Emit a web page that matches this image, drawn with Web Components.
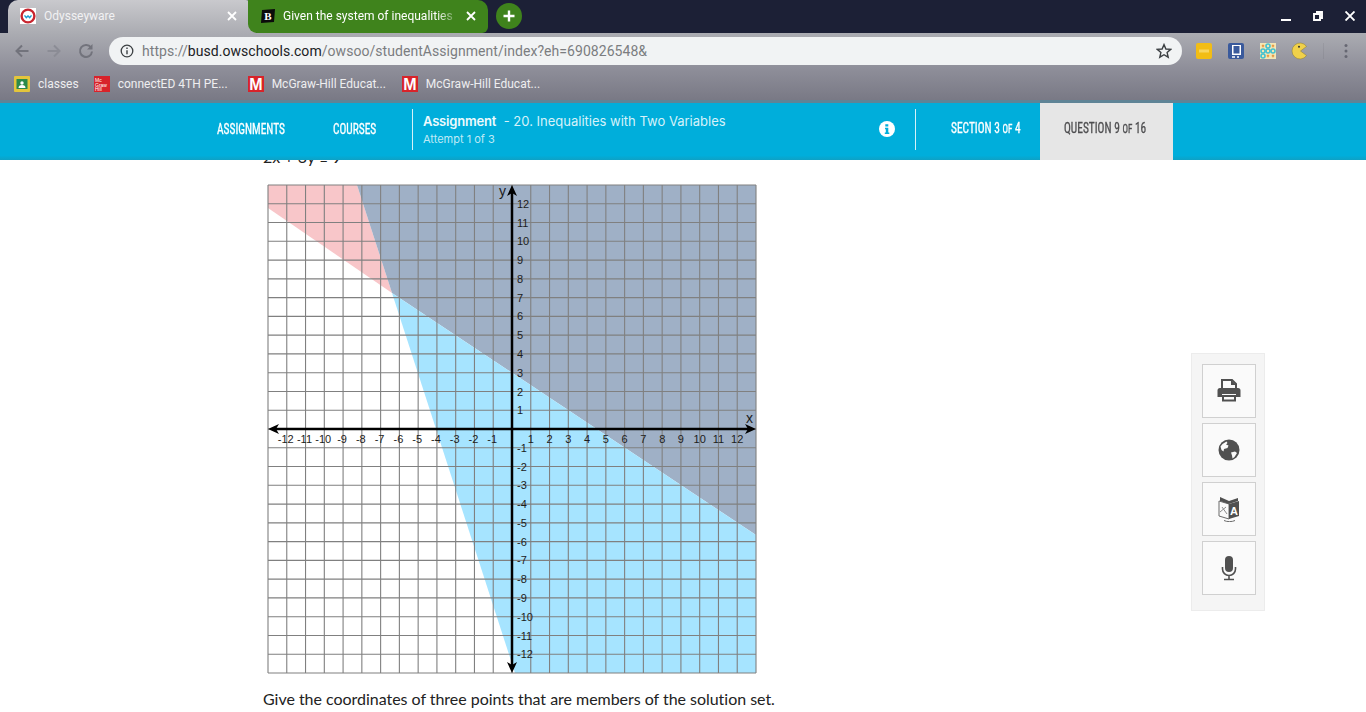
<!DOCTYPE html>
<html lang="en">
<head>
<meta charset="utf-8">
<title>Odysseyware</title>
<style>
    html, body { margin: 0; height: 712px; overflow: hidden; background: #fff; }
    body { display: flex; flex-direction: column; font-family: "Lato", "Liberation Sans", sans-serif; }
</style>
</head>
<body>
<browser-tabs></browser-tabs>
<browser-toolbar></browser-toolbar>
<bookmark-bar></bookmark-bar>
<lesson-header></lesson-header>
<question-view></question-view>

<script>
class BrowserTabs extends HTMLElement {
    constructor() {
        super();
        this.attachShadow({ mode: 'open' });
    }

    connectedCallback() {
        this.shadowRoot.innerHTML = `
            <style>
                :host {
                    display: flex;
                    height: 33px;
                    flex: none;
                    background: #1c2036;
                    font: 12px Roboto, sans-serif;
                    color: #fff;
                }
                .tab {
                    display: flex;
                    align-items: center;
                    box-sizing: border-box;
                    height: 33px;
                    padding-bottom: 2px;
                }
                .first {
                    width: 248px;
                    margin: 0 -8px 0 8px;
                    padding: 0 19px 2px 12px;
                    border-radius: 10px 10px 0 0;
                    background: linear-gradient(#c9c9cd, #abacb2);
                    color: #f1f1f3;
                }
                .second {
                    position: relative;
                    width: 240px;
                    padding-left: 12px;
                    border-radius: 0 10px 6px 9px;
                    background: #3f831c;
                }
                .icon { flex: none; width: 16px; height: 16px; margin-right: 8px; }
                .second .icon { margin-right: 7px; }
                .title { flex: 1; overflow: hidden; white-space: nowrap; }
                .second .title {
                    -webkit-mask-image: linear-gradient(90deg, #000 90%, rgba(0, 0, 0, .25));
                    mask-image: linear-gradient(90deg, #000 90%, rgba(0, 0, 0, .25));
                }
                .close { flex: none; width: 10px; height: 10px; }
                .second .close { margin: 0 12px 0 12px; }
                .plus { flex: none; width: 30px; height: 30px; margin: 1px 0 0 6px; }
                .space { flex: 1; }
                .win { display: flex; align-items: center; gap: 22px; padding: 0 11px 2px 0; }
            </style>
            <div class="tab first">
                <svg class="icon" viewBox="0 0 16 16">
                    <rect width="16" height="16" fill="#fff"/>
                    <circle cx="8" cy="8" r="6.4" fill="#fff" stroke="#c8252f" stroke-width="2.4"/>
                    <path d="M4.5 7.4l1.8 2.2 1.7-1.7 1.7 1.7 1.8-2.2" fill="none" stroke="#1d9bd1" stroke-width="1.4"/>
                </svg>
                <span class="title">Odysseyware</span>
                <svg class="close" viewBox="0 0 10 10"><path d="M1 1l8 8M9 1l-8 8" stroke="#fff" stroke-width="1.8"/></svg>
            </div>
            <div class="tab second">
                <svg class="icon" viewBox="0 0 16 16">
                    <path d="M2 2l13-1-1 13-13 1z" fill="#0b0b0b"/>
                    <text x="8" y="12" text-anchor="middle" font-family="Liberation Serif" font-weight="700" font-size="11" fill="#fff">B</text>
                </svg>
                <span class="title">Given the system of inequalities</span>
                <svg class="close" viewBox="0 0 10 10"><path d="M1 1l8 8M9 1l-8 8" stroke="#fff" stroke-width="1.8"/></svg>
            </div>
            <svg class="plus" viewBox="0 0 30 30">
                <circle cx="15" cy="15" r="13" fill="#3f831c"/>
                <path d="M15 9.5v11M9.5 15h11" stroke="#fff" stroke-width="2.4"/>
            </svg>
            <div class="space"></div>
            <div class="win">
                <svg width="10" height="10" viewBox="0 0 10 10"><path d="M0 9h10" stroke="#fff" stroke-width="2"/></svg>
                <svg width="10" height="10" viewBox="0 0 10 10"><path d="M3 1h6v6H7M1 3h6v6H1z" fill="none" stroke="#fff" stroke-width="1.9"/></svg>
                <svg width="10" height="10" viewBox="0 0 10 10"><path d="M.5.5l9 9M9.5.5l-9 9" stroke="#fff" stroke-width="1.9"/></svg>
            </div>
        `;
    }
}

class BrowserToolbar extends HTMLElement {
    constructor() {
        super();
        this.attachShadow({ mode: 'open' });
    }

    connectedCallback() {
        this.shadowRoot.innerHTML = `
            <style>
                :host {
                    display: flex;
                    align-items: center;
                    height: 36px;
                    flex: none;
                    background: linear-gradient(#abacb2, #8e8e99);
                    font: 14px Roboto, sans-serif;
                }
                .nav { display: flex; gap: 14px; padding-left: 13px; }
                .nav svg { width: 18px; height: 18px; }
                .omni {
                    display: flex;
                    align-items: center;
                    box-sizing: border-box;
                    width: 1073px;
                    height: 28px;
                    margin-left: 14px;
                    padding: 0 10px 0 11px;
                    border-radius: 14px;
                    background: #f1f3f4;
                    color: #7b7d80;
                }
                .omni .url { flex: 1; margin-left: 8px; letter-spacing: .05px; }
                .omni b { font-weight: 400; color: #202124; }
                .ext { display: flex; gap: 14px; margin-left: 13px; }
                .ext svg { width: 18px; height: 18px; }
                .sep { width: 1px; height: 16px; margin-left: 14px; background: rgba(0, 0, 0, .06); }
                .menu { margin-left: 20px; }
            </style>
            <div class="nav">
                <svg viewBox="0 0 18 18"><path d="M15.5 9H3.5M9 3.5L3.5 9 9 14.5" fill="none" stroke="#72737c" stroke-width="2"/></svg>
                <svg viewBox="0 0 18 18"><path d="M2.5 9h12M9 3.5L14.5 9 9 14.5" fill="none" stroke="#8b8c95" stroke-width="2"/></svg>
                <svg viewBox="0 0 18 18"><path d="M14 5.6A6 6 0 1 0 15 9.5" fill="none" stroke="#72737c" stroke-width="2"/><path d="M15.5 2v5.5H10z" fill="#72737c"/></svg>
            </div>
            <div class="omni">
                <svg width="14" height="14" viewBox="0 0 14 14"><circle cx="7" cy="7" r="5.8" fill="none" stroke="#3c4043" stroke-width="1.3"/><path d="M7 6.2v4M7 3.6v1.4" stroke="#3c4043" stroke-width="1.4"/></svg>
                <span class="url">https://<b>busd.owschools.com</b>/owsoo/studentAssignment/index?eh=690826548&amp;</span>
                <svg width="16" height="16" viewBox="0 0 16 16"><path d="M8 1.6l1.9 4.4 4.8.4-3.6 3.1 1.1 4.7L8 11.7l-4.2 2.5 1.1-4.700L1.300 6.400l4.800-.4z" fill="none" stroke="#3c4043" stroke-width="1.400"/></svg>
            </div>
            <div class="ext">
                <svg viewBox="0 0 18 18"><rect x="1" y="1" width="16" height="16" rx="2" fill="#f2bd14"/><rect x="4" y="7.500" width="10" height="3" fill="#f8d65e"/></svg>
                <svg viewBox="0 0 18 18"><rect x="1" y="1" width="16" height="16" rx="2" fill="#3a5a9c"/><rect x="5" y="3" width="9" height="10" fill="#fff"/><rect x="6.500" y="4" width="6" height="7.500" fill="#3a5a9c"/><path d="M5 15h3M10 15h2" stroke="#fff" stroke-width="1.500"/></svg>
                <svg viewBox="0 0 18 18">
                    <rect x="1" y="1" width="16" height="16" fill="#f3e6b4"/>
                    <g fill="none" stroke="#46c0cf" stroke-width="1.600"><circle cx="9" cy="4" r="2"/><circle cx="4" cy="9" r="2"/><circle cx="9" cy="9" r="2"/><circle cx="14" cy="9" r="2"/><circle cx="4" cy="14" r="2"/></g>
                    <path d="M3 3l2 2M5 3L3 5M13 3l2 2M15 3l-2 2M8 13l2 2M10 13l-2 2M13 13l2 2M15 13l-2 2" stroke="#e79a45" stroke-width="1.300"/>
                </svg>
                <svg viewBox="0 0 18 18"><path d="M15.550 4.400A8 8 0 1 0 15.550 13.600L9.500 9z" fill="#f0d14a" stroke="#8a7a30" stroke-width=".5"/><circle cx="8" cy="4.800" r="1" fill="#333"/></svg>
            </div>
            <div class="sep"></div>
            <svg class="menu" width="4" height="16" viewBox="0 0 4 16"><g fill="#666772"><circle cx="2" cy="2.500" r="1.500"/><circle cx="2" cy="8" r="1.500"/><circle cx="2" cy="13.500" r="1.500"/></g></svg>
        `;
    }
}

class BookmarkBar extends HTMLElement {
    constructor() {
        super();
        this.attachShadow({ mode: 'open' });
    }

    connectedCallback() {
        this.shadowRoot.innerHTML = `
            <style>
                :host {
                    display: flex;
                    align-items: center;
                    gap: 16px;
                    box-sizing: border-box;
                    height: 31px;
                    flex: none;
                    padding: 0 0 1px 14px;
                    background: linear-gradient(#8e8e99, #797985);
                    font: 12px Roboto, sans-serif;
                    color: #eeeef0;
                }
                .mark { display: flex; align-items: center; gap: 8px; white-space: nowrap; }
                .second { margin-left: -1px; }
                .third { margin-left: 4px; }
                svg { flex: none; width: 16px; height: 16px; }
            </style>
            <div class="mark">
                <svg viewBox="0 0 16 16"><rect width="16" height="16" rx="1" fill="#e3c53c"/><rect x="2.500" y="3" width="11" height="10" fill="#2b8a4b"/><circle cx="8" cy="7" r="1.700" fill="#fff"/><path d="M4.500 12a3.500 3 0 0 1 7 0z" fill="#fff"/></svg>
                <span>classes</span>
            </div>
            <div class="mark second">
                <svg viewBox="0 0 16 16"><rect width="16" height="16" fill="#d8232a"/><text x="1" y="5.500" font-size="5" font-family="Liberation Sans" fill="#fff">Mc</text><text x="1" y="10.500" font-size="5" font-family="Liberation Sans" fill="#fff">Graw</text><text x="1" y="15" font-size="5" font-family="Liberation Sans" fill="#fff">Hill</text></svg>
                <span>connectED 4TH PE...</span>
            </div>
            <div class="mark third">
                <svg viewBox="0 0 16 16"><rect width="16" height="16" fill="#d8232a"/><text x="8" y="14" text-anchor="middle" font-size="16" font-weight="700" font-family="Liberation Sans" fill="#fff">M</text></svg>
                <span>McGraw-Hill Educat...</span>
            </div>
            <div class="mark">
                <svg viewBox="0 0 16 16"><rect width="16" height="16" fill="#d8232a"/><text x="8" y="14" text-anchor="middle" font-size="16" font-weight="700" font-family="Liberation Sans" fill="#fff">M</text></svg>
                <span>McGraw-Hill Educat...</span>
            </div>
        `;
    }
}

class LessonHeader extends HTMLElement {
    constructor() {
        super();
        this.attachShadow({ mode: 'open' });
    }

    connectedCallback() {
        this.shadowRoot.innerHTML = `
            <style>
                :host {
                    display: flex;
                    box-sizing: border-box;
                    height: 60px;
                    flex: none;
                    position: relative;
                    z-index: 2;
                    border-top: 3px solid #5f8496;
                    background: linear-gradient(#00aedb 92%, #0ea1c5);
                    color: #fff;
                }
                .caps {
                    font-family: "Liberation Sans Narrow", "Roboto Condensed", "Liberation Sans", sans-serif;
                    font-size: 15px;
                    white-space: nowrap;
                    text-transform: uppercase;
                    -webkit-text-stroke: .3px currentColor;
                }
                .caps span { display: inline-block; transform: scaleX(.76); transform-origin: 0 50%; }
                .caps small { font-size: 12px; }
                .link { align-self: center; padding-bottom: 6px; }
                .section { padding-bottom: 7px; }
                .assignments { margin-left: 217px; width: 116px; }
                .courses { width: 79px; }
                .rule { width: 1px; height: 41px; margin-top: 6px; background: #d5f1f8; }
                .title { width: 456px; margin-left: 10px; padding-top: 9px; font-family: Inter, "Liberation Sans", sans-serif; }
                .line1 { font-size: 13px; line-height: 18px; color: #d6f2fa; }
                .line1 b { font-weight: 600; color: #eefafd; margin-right: 4px; letter-spacing: -.2px; }
                .line2 { font-size: 11px; line-height: 18px; color: #bfeaf6; }
                .info { align-self: center; width: 16px; height: 16px; margin: 0 20px 5px 0; }
                .section { margin-left: 35px; width: 89px; }
                .question {
                    box-sizing: border-box;
                    width: 133px;
                    padding: 0 0 0 24px;
                    background: #e6e6e6;
                    color: #4d4d4f;
                    line-height: 50px;
                }
            </style>
            <div class="caps link assignments"><span>Assignments</span></div>
            <div class="caps link courses"><span>Courses</span></div>
            <div class="rule"></div>
            <div class="title">
                <div class="line1"><b>Assignment</b> - 20. Inequalities with Two Variables</div>
                <div class="line2">Attempt 1 of 3</div>
            </div>
            <svg class="info" viewBox="0 0 16 16">
                <circle cx="8" cy="8" r="8" fill="#fff"/>
                <path d="M6.300 3.200h3v2.400h-3zM6 6.700h3.300v4.700h1v1.500H5.800v-1.500h1v-3.200H6z" fill="#00aedb"/>
            </svg>
            <div class="rule"></div>
            <div class="caps link section"><span>Section 3 <small>of</small> 4</span></div>
            <div class="caps question"><span>Question 9 <small>of</small> 16</span></div>
        `;
    }
}

class InequalityGraph extends HTMLElement {
    constructor() {
        super();
        this.attachShadow({ mode: 'open' });
    }

    connectedCallback() {
        const cell = 488 / 26;
        const mid = 245;
        let grid = '';
        for (let i = 0; i <= 26; i++) {
            const p = (1 + i * cell).toFixed(2);
            grid += `<path d="M${p} 1V489M1 ${p}H489"/>`;
        }
        let labels = '';
        for (let n = 1; n <= 12; n++) {
            const d = n * cell;
            labels += `<text x="${(mid + d).toFixed(1)}" y="259" text-anchor="middle">${n}</text>`;
            labels += `<text x="${(mid - d - 1).toFixed(1)}" y="259" text-anchor="middle">-${n}</text>`;
            labels += `<text x="${mid + 5}" y="${(mid - d + 4).toFixed(1)}">${n}</text>`;
            labels += `<text x="${mid + 5}" y="${(mid + d + 4).toFixed(1)}">-${n}</text>`;
        }
        this.shadowRoot.innerHTML = `
            <style>
                :host { display: block; width: 491px; height: 491px; margin-left: 4px; }
                svg { display: block; }
                .grid path { fill: none; stroke: #808080; stroke-width: 1.100; }
                text { font: 11px "Liberation Sans", sans-serif; fill: #1c1c1c; }
                .name { font-size: 14px; }
            </style>
            <svg width="491" height="491" viewBox="0 0 491 491">
                <polygon points="1,1 90,1 125,109 1,24" fill="#f8c6c9"/>
                <polygon points="90,1 489,1 489,351 125,109" fill="#9fb0c6"/>
                <polygon points="125,109 489,351 489,489 248,489" fill="#a6e4ff"/>
                <g class="grid">${grid}</g>
                <path d="M6 245H484M245 6V484" stroke="#000" stroke-width="2.500" fill="none"/>
                <path d="M1 245l11-5-3 5 3 5zM489 245l-11-5 3 5-3 5zM245 1l-5 11 5-3 5 3zM245 489l-5-11 5 3 5-3z" fill="#000"/>
                ${labels}
                <text class="name" x="479" y="239">x</text>
                <text class="name" x="232" y="12">y</text>
            </svg>
        `;
    }
}

class ToolPanel extends HTMLElement {
    constructor() {
        super();
        this.attachShadow({ mode: 'open' });
    }

    connectedCallback() {
        this.shadowRoot.innerHTML = `
            <style>
                :host {
                    display: flex;
                    flex-direction: column;
                    gap: 5px;
                    position: absolute;
                    top: 193px;
                    right: 101px;
                    box-sizing: border-box;
                    width: 74px;
                    height: 258px;
                    padding: 10px 8px 0 10px;
                    border: 1px solid #ececec;
                    background: #f5f5f5;
                }
                .btn {
                    box-sizing: border-box;
                    display: flex;
                    align-items: center;
                    justify-content: center;
                    width: 54px;
                    height: 54px;
                    border: 1px solid #d0d0d0;
                    background: #fafafa;
                }
                svg { width: 26px; height: 26px; }
            </style>
            <div class="btn">
                <svg viewBox="0 0 26 26"><path d="M6 2h10l4 4v6H6z" fill="#fafafa" stroke="#505050" stroke-width="2"/><path d="M15 2v5h5z" fill="#505050"/><path d="M4 10h18a2.500 2.500 0 0 1 2.500 2.500V19H20v-3H6v3H1.500v-6.500A2.500 2.500 0 0 1 4 10z" fill="#505050"/><rect x="7" y="18" width="12" height="4.500" fill="none" stroke="#505050" stroke-width="2"/></svg>
            </div>
            <div class="btn">
                <svg viewBox="0 0 26 26"><circle cx="13" cy="13" r="10.500" fill="#505050"/><path d="M6.500 7l4-2.500 1 1.500-1.500 1.500 2.500 1-1 2.500-3.500 1-.5 2.500-2-1.500-1-3.500zM15 15.500l4-1 2 1.500-2.500 4-2 1.500-.5-3z" fill="#fafafa"/></svg>
            </div>
            <div class="btn">
                <svg viewBox="0 0 26 26"><path d="M3 5l10 3v15l-10-3z" fill="#fafafa" stroke="#6a6a6a" stroke-width="1"/><path d="M13 8l10-3v15l-10 3z" fill="#505050"/><path d="M4 1v4l9 3V5zM22 2l-9 3v3l9-3z" fill="#505050"/><path d="M6 11l5 7M10 11l-6 5" stroke="#8a8a8a" stroke-width="1"/><text x="18" y="18.500" text-anchor="middle" font-family="Liberation Sans" font-weight="700" font-size="11" fill="#fff">A</text><path d="M8 24.500c3 1.500 8 1.500 11 0" fill="none" stroke="#6a6a6a"/></svg>
            </div>
            <div class="btn">
                <svg viewBox="0 0 26 26"><rect x="9" y="1" width="8" height="16" rx="4" fill="#505050"/><path d="M6.500 12v2a6.500 6.500 0 0 0 13 0v-2M13 20.500V24M8 24.500h10" fill="none" stroke="#505050" stroke-width="1.600"/></svg>
            </div>
        `;
    }
}

class QuestionView extends HTMLElement {
    constructor() {
        super();
        this.attachShadow({ mode: 'open' });
    }

    connectedCallback() {
        this.shadowRoot.innerHTML = `
            <style>
                :host {
                    display: block;
                    flex: 1;
                    position: relative;
                    overflow: hidden;
                    padding-left: 263px;
                    font: 16px/24px Lato, "Liberation Sans", sans-serif;
                    color: #222;
                }
                .eq { margin: -15px 0 15px; }
                .ask { margin: 12px 0 0; letter-spacing: -.03px; }
            </style>
            <p class="eq">2x + 3y ≥ 9</p>
            <inequality-graph></inequality-graph>
            <p class="ask">Give the coordinates of three points that are members of the solution set.</p>
            <tool-panel></tool-panel>
        `;
    }
}

customElements.define('browser-tabs', BrowserTabs);
customElements.define('browser-toolbar', BrowserToolbar);
customElements.define('bookmark-bar', BookmarkBar);
customElements.define('lesson-header', LessonHeader);
customElements.define('inequality-graph', InequalityGraph);
customElements.define('tool-panel', ToolPanel);
customElements.define('question-view', QuestionView);
</script>
</body>
</html>
